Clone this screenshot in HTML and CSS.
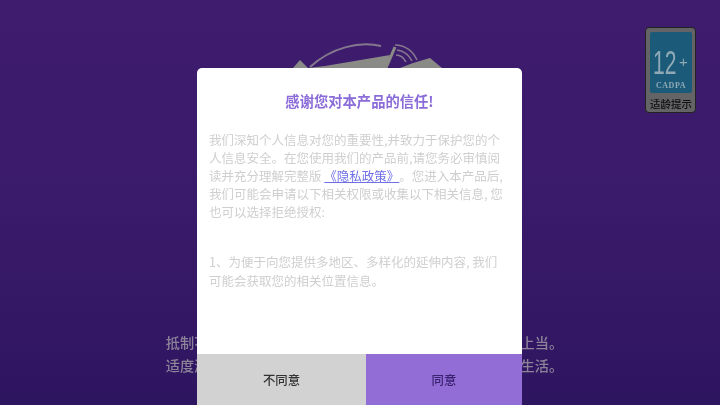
FILE: index.html
```html
<!DOCTYPE html>
<html lang="zh-CN">
<head>
    <meta charset="UTF-8">
    <meta name="viewport" content="width=device-width, initial-scale=1.0">
    <title>隐私政策</title>
    <link rel="stylesheet" href="styles.css">
</head>
<body>
    <div class="stage">
        <svg class="logo" width="180" height="50" viewBox="0 0 180 50">
            <path d="M40 37C62 17 90 11 111 16" fill="none" stroke="#84788f" stroke-width="2"/>
            <path d="M23 38L30 30L38 38L55 36L120 25L117 38Z" fill="#8a8a86"/>
            <path d="M130 38L143 33L160 28L172 38Z" fill="#8a8a86"/>
            <path d="M116 38L125 17" fill="none" stroke="#8a8a86" stroke-width="3"/>
            <path d="M125 15C135 15 143 21 147 30M127 20C134 21 139 25 142 31M126 25C130 25 134 28 136 32" fill="none" stroke="#84788f" stroke-width="1.6"/>
        </svg>

        <div class="age-badge">
            <div class="age-plate">
                <div class="age-num"><span class="age-digits">12</span><span class="age-plus">+</span></div>
                <div class="age-org">CADPA</div>
            </div>
            <div class="age-label">适龄提示</div>
        </div>

        <div class="notice">
            <p>抵制不良游戏，拒绝盗版游戏。注意自我保护，谨防受骗上当。</p>
            <p>适度游戏益脑，沉迷游戏伤身。合理安排时间，享受健康生活。</p>
        </div>

        <div class="dialog">
            <h1>感谢您对本产品的信任!</h1>
            <div class="dialog-body">
                <p>我们深知个人信息对您的重要性,并致力于保护您的个人信息安全。在您使用我们的产品前,请您务必审慎阅读并充分理解完整版 <a href="#">《隐私政策》</a>。您进入本产品后,我们可能会申请以下相关权限或收集以下相关信息, 您也可以选择拒绝授权:</p>
                <p>1、为便于向您提供多地区、多样化的延伸内容, 我们可能会获取您的相关位置信息。</p>
            </div>
            <div class="dialog-buttons">
                <button class="btn-no">不同意</button>
                <button class="btn-yes">同意</button>
            </div>
        </div>
    </div>
</body>
</html>
```

FILE: styles.css
```css
html, body {
    margin: 0;
    height: 100%;
}

body {
    font-family: "Noto Sans CJK SC", "Noto Sans", sans-serif;
    text-spacing-trim: space-all;
    overflow: hidden;
}

.stage {
    position: relative;
    width: 720px;
    height: 405px;
    display: flex;
    flex-direction: column;
    justify-content: flex-end;
    align-items: center;
    background: linear-gradient(180deg, #3f1c6e 0%, #3a1a6a 50%, #2e1560 100%);
    overflow: hidden;
}

.logo {
    position: absolute;
    left: 270px;
    top: 30px;
}

.notice {
    padding: 0 0 28px 9px;
    color: #8d8399;
    font-size: 14.2px;
    font-weight: 500;
    line-height: 23px;
    filter: blur(0.4px);
}

.notice p {
    margin: 0;
}

.age-badge {
    position: absolute;
    left: 645px;
    top: 27px;
    width: 51px;
    height: 86px;
    box-sizing: border-box;
    padding: 4px 3px 0 4px;
    background: #646466;
    border: 1px solid #222;
    border-radius: 4px;
    filter: blur(0.5px);
}

.age-plate {
    height: 61px;
    background: #1c5a7a;
    border-radius: 2px;
    color: #8fa9b5;
    text-align: center;
}

.age-num {
    display: flex;
    align-items: center;
    height: 32px;
    padding: 14px 0 0 3px;
    font-family: "Liberation Sans", sans-serif;
}

.age-digits {
    width: 20px;
    font-size: 34px;
    line-height: 32px;
    transform: scaleX(0.62);
    transform-origin: left center;
}

.age-plus {
    margin-left: 6px;
    font-size: 15px;
    line-height: 16px;
}

.age-org {
    margin-top: 3px;
    font-family: "Liberation Serif", serif;
    font-size: 8px;
    font-weight: bold;
    line-height: 10px;
    letter-spacing: 0.5px;
}

.age-label {
    margin-top: 3px;
    color: #111;
    font-size: 10.5px;
    font-weight: 500;
    line-height: 15px;
    text-align: center;
    white-space: nowrap;
}

.dialog {
    position: absolute;
    left: 197px;
    top: 68px;
    width: 325px;
    height: 337px;
    display: flex;
    flex-direction: column;
    background: #fff;
    border-radius: 5px 5px 0 0;
    overflow: hidden;
}

.dialog h1 {
    margin: 23px 0 0;
    color: #8a6bd8;
    font-size: 14.3px;
    font-weight: 700;
    line-height: 20px;
    text-align: center;
    filter: blur(0.4px);
}

.dialog-body {
    flex: 1;
    padding: 20px 16px 0 12px;
    color: #cfcfcf;
    font-size: 12.5px;
    line-height: 18.1px;
    filter: blur(0.4px);
}

.dialog-body p {
    margin: 0 0 32px;
}

.dialog-body a {
    display: inline-block;
    color: #6f6fe6;
    line-height: 16px;
}

.dialog-buttons {
    display: flex;
    height: 51px;
}

.dialog-buttons button {
    border: none;
    padding: 0;
    font-family: inherit;
    font-size: 12.4px;
    font-weight: 500;
    filter: blur(0.3px);
}

.btn-no {
    width: 169px;
    background: #d2d2d2;
    color: #333;
}

.btn-yes {
    flex: 1;
    background: #916dd5;
    color: #3a2270;
}
```
